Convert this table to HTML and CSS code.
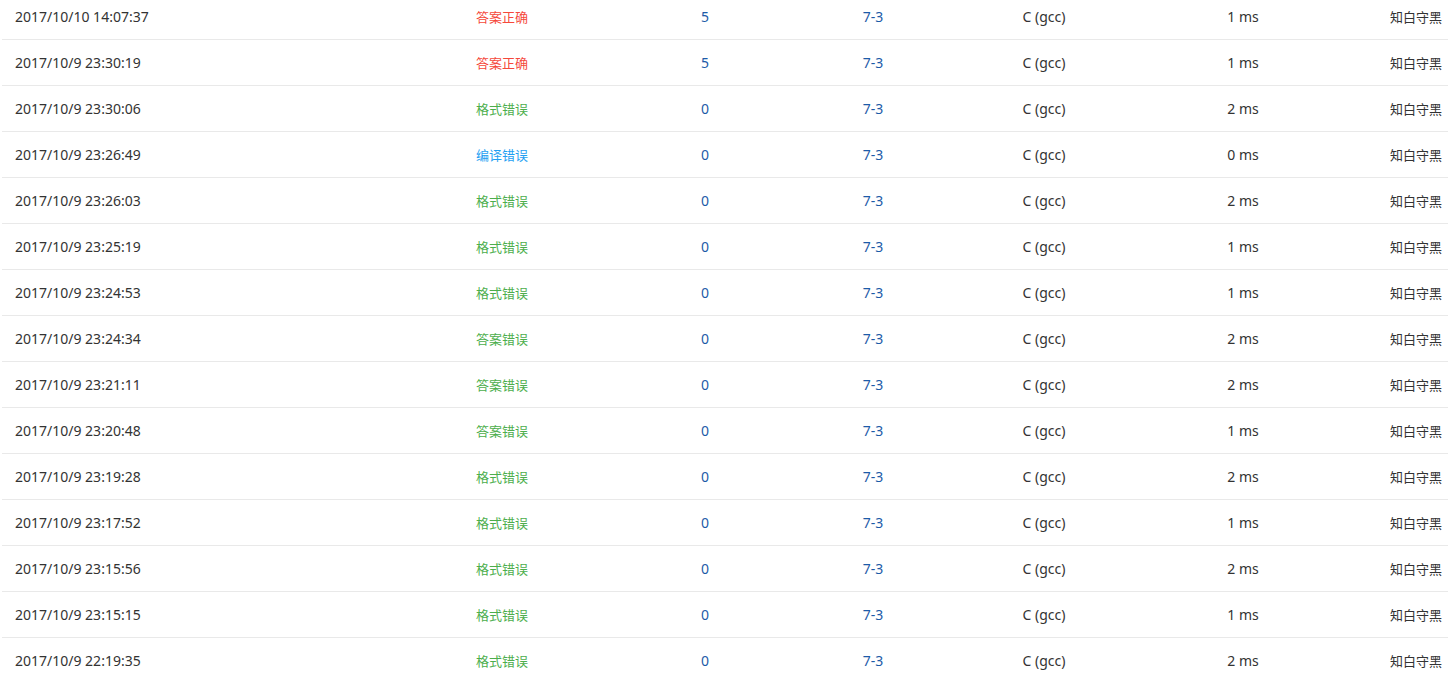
FILE: index.html
```html
<!DOCTYPE html>
<html lang="zh">
<head>
<meta charset="utf-8">
<title>提交记录</title>
<link rel="stylesheet" href="styles.css">
</head>
<body>
<div class="table">
  <div class="row"><div class="c-time">2017/10/10 14:07:37</div><div class="c-status ok">答案正确</div><div class="c-score">5</div><div class="c-prob">7-3</div><div class="c-comp">C (gcc)</div><div class="c-run">1 ms</div><div class="c-user">知白守黑</div></div>
  <div class="row"><div class="c-time">2017/10/9 23:30:19</div><div class="c-status ok">答案正确</div><div class="c-score">5</div><div class="c-prob">7-3</div><div class="c-comp">C (gcc)</div><div class="c-run">1 ms</div><div class="c-user">知白守黑</div></div>
  <div class="row"><div class="c-time">2017/10/9 23:30:06</div><div class="c-status fmt">格式错误</div><div class="c-score">0</div><div class="c-prob">7-3</div><div class="c-comp">C (gcc)</div><div class="c-run">2 ms</div><div class="c-user">知白守黑</div></div>
  <div class="row"><div class="c-time">2017/10/9 23:26:49</div><div class="c-status ce">编译错误</div><div class="c-score">0</div><div class="c-prob">7-3</div><div class="c-comp">C (gcc)</div><div class="c-run">0 ms</div><div class="c-user">知白守黑</div></div>
  <div class="row"><div class="c-time">2017/10/9 23:26:03</div><div class="c-status fmt">格式错误</div><div class="c-score">0</div><div class="c-prob">7-3</div><div class="c-comp">C (gcc)</div><div class="c-run">2 ms</div><div class="c-user">知白守黑</div></div>
  <div class="row"><div class="c-time">2017/10/9 23:25:19</div><div class="c-status fmt">格式错误</div><div class="c-score">0</div><div class="c-prob">7-3</div><div class="c-comp">C (gcc)</div><div class="c-run">1 ms</div><div class="c-user">知白守黑</div></div>
  <div class="row"><div class="c-time">2017/10/9 23:24:53</div><div class="c-status fmt">格式错误</div><div class="c-score">0</div><div class="c-prob">7-3</div><div class="c-comp">C (gcc)</div><div class="c-run">1 ms</div><div class="c-user">知白守黑</div></div>
  <div class="row"><div class="c-time">2017/10/9 23:24:34</div><div class="c-status fmt">答案错误</div><div class="c-score">0</div><div class="c-prob">7-3</div><div class="c-comp">C (gcc)</div><div class="c-run">2 ms</div><div class="c-user">知白守黑</div></div>
  <div class="row"><div class="c-time">2017/10/9 23:21:11</div><div class="c-status fmt">答案错误</div><div class="c-score">0</div><div class="c-prob">7-3</div><div class="c-comp">C (gcc)</div><div class="c-run">2 ms</div><div class="c-user">知白守黑</div></div>
  <div class="row"><div class="c-time">2017/10/9 23:20:48</div><div class="c-status fmt">答案错误</div><div class="c-score">0</div><div class="c-prob">7-3</div><div class="c-comp">C (gcc)</div><div class="c-run">1 ms</div><div class="c-user">知白守黑</div></div>
  <div class="row"><div class="c-time">2017/10/9 23:19:28</div><div class="c-status fmt">格式错误</div><div class="c-score">0</div><div class="c-prob">7-3</div><div class="c-comp">C (gcc)</div><div class="c-run">2 ms</div><div class="c-user">知白守黑</div></div>
  <div class="row"><div class="c-time">2017/10/9 23:17:52</div><div class="c-status fmt">格式错误</div><div class="c-score">0</div><div class="c-prob">7-3</div><div class="c-comp">C (gcc)</div><div class="c-run">1 ms</div><div class="c-user">知白守黑</div></div>
  <div class="row"><div class="c-time">2017/10/9 23:15:56</div><div class="c-status fmt">格式错误</div><div class="c-score">0</div><div class="c-prob">7-3</div><div class="c-comp">C (gcc)</div><div class="c-run">2 ms</div><div class="c-user">知白守黑</div></div>
  <div class="row"><div class="c-time">2017/10/9 23:15:15</div><div class="c-status fmt">格式错误</div><div class="c-score">0</div><div class="c-prob">7-3</div><div class="c-comp">C (gcc)</div><div class="c-run">1 ms</div><div class="c-user">知白守黑</div></div>
  <div class="row last"><div class="c-time">2017/10/9 22:19:35</div><div class="c-status fmt">格式错误</div><div class="c-score">0</div><div class="c-prob">7-3</div><div class="c-comp">C (gcc)</div><div class="c-run">2 ms</div><div class="c-user">知白守黑</div></div>
</div>
</body>
</html>
```
FILE: styles.css
```css
html, body {
  margin: 0;
  padding: 0;
  background: #fff;
  overflow: hidden;
}
body {
  font-family: "Noto Sans", "Noto Sans CJK SC", sans-serif;
  font-size: 14px;
  color: #333;
}
.table {
  margin: -6px 1px 0 2px;
}
.row {
  display: grid;
  grid-template-columns: 398px 204px 202px 134px 208px 190px 110px;
  height: 45px;
  align-items: center;
  border-bottom: 1px solid #e9e9e9;
}
.row.last {
  border-bottom: none;
}
.row > div {
  white-space: nowrap;
}
.c-time {
  padding-left: 13px;
}
.c-status, .c-score, .c-prob, .c-comp, .c-run {
  text-align: center;
}
.c-status, .c-user {
  font-size: 13px;
}
.c-user {
  text-align: right;
  padding-right: 6px;
}
.ok { color: #f5483b; }
.fmt { color: #4cae4c; }
.ce { color: #1e9ff2; }
.c-score, .c-prob { color: #1d5ba8; }
```
